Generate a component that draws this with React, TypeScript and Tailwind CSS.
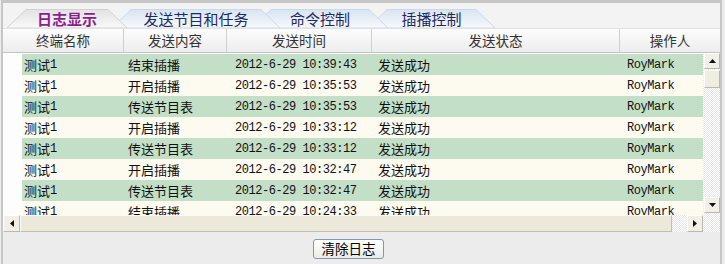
import React from "react";

const rows: string[][] = [
  ["测试", "结束插播", "2012-6-29 10:39:43", "发送成功", "RoyMark"],
  ["测试", "开启插播", "2012-6-29 10:35:53", "发送成功", "RoyMark"],
  ["测试", "传送节目表", "2012-6-29 10:35:53", "发送成功", "RoyMark"],
  ["测试", "开启插播", "2012-6-29 10:33:12", "发送成功", "RoyMark"],
  ["测试", "传送节目表", "2012-6-29 10:33:12", "发送成功", "RoyMark"],
  ["测试", "开启插播", "2012-6-29 10:32:47", "发送成功", "RoyMark"],
  ["测试", "传送节目表", "2012-6-29 10:32:47", "发送成功", "RoyMark"],
  ["测试", "结束插播", "2012-6-29 10:24:33", "发送成功", "RoyMark"],
];

function Tab({
  label,
  width,
  active,
  id,
  className,
}: {
  label: string;
  width: number;
  active?: boolean;
  id: string;
  className: string;
}) {
  const h = 19;
  const s = 19;
  return (
    <div className={`relative h-[19px] flex items-center justify-center shrink-0 ${className}`}>
      <svg
        className="absolute inset-0"
        width={width}
        height={h}
        viewBox={`0 0 ${width} ${h}`}
      >
        <defs>
          <linearGradient id={id} x1="0" y1="0" x2="0" y2="1">
            <stop offset="0" stopColor={active ? "#e2e2e2" : "#d8e4f1"} />
            <stop offset="1" stopColor={active ? "#f9f9f9" : "#f7f9fc"} />
          </linearGradient>
        </defs>
        <polygon
          points={`0,${h} ${s},0.5 ${width - s},0.5 ${width},${h}`}
          fill={`url(#${id})`}
          stroke={active ? "#d2d2d2" : "#c9d8ea"}
          strokeWidth="1"
        />
      </svg>
      <span
        className={`relative leading-none text-[15px] font-['Noto_Sans_CJK_SC',sans-serif] ${
          active ? "font-bold text-[#8a1f8c]" : "text-[#1d2a5e]"
        }`}
      >
        {label}
      </span>
    </div>
  );
}

function UpArrow() {
  return (
    <svg width="7" height="4" viewBox="0 0 7 4">
      <polygon points="0,4 3.5,0 7,4" fill="#111" />
    </svg>
  );
}
function DownArrow() {
  return (
    <svg width="7" height="4" viewBox="0 0 7 4">
      <polygon points="0,0 3.5,4 7,0" fill="#111" />
    </svg>
  );
}
function LeftArrow() {
  return (
    <svg width="4" height="7" viewBox="0 0 4 7">
      <polygon points="4,0 0,3.5 4,7" fill="#111" />
    </svg>
  );
}
function RightArrow() {
  return (
    <svg width="4" height="7" viewBox="0 0 4 7">
      <polygon points="0,0 4,3.5 0,7" fill="#111" />
    </svg>
  );
}

const cjk = "font-['Noto_Sans_CJK_SC',sans-serif]";
const mono = "font-['Liberation_Mono',monospace]";

export default function App() {
  return (
    <div className="w-[725px] h-[264px] bg-[#ededed] pl-[1px] pr-[3px] overflow-hidden">
      <div className="h-[280px] border-t-[3px] border-x-2 border-[#c6c6c6] flex flex-col">
        {/* Tabs */}
        <div className="h-[25px] bg-[#f3f3f3] flex items-end pl-[4px]">
          <Tab label="日志显示" width={120} active id="g1" className="w-[120px] z-40" />
          <Tab label="发送节目和任务" width={168} id="g2" className="w-[168px] -ml-[15px] z-30" />
          <Tab label="命令控制" width={136} id="g3" className="w-[136px] -ml-[28px] z-20" />
          <Tab label="插播控制" width={127} id="g4" className="w-[127px] -ml-[20px] z-10" />
        </div>

        {/* Header */}
        <div
          className={`h-[25px] flex border-t border-b border-t-[#e2e2e2] border-b-[#c4c4c4] bg-gradient-to-b from-[#fdfdfd] to-[#ededed] text-[13.5px] leading-none text-[#333] ${cjk}`}
        >
          <div className="w-[121px] flex items-center justify-center border-r border-[#cfcfcf]">终端名称</div>
          <div className="w-[103px] flex items-center justify-center border-r border-[#cfcfcf]">发送内容</div>
          <div className="w-[145px] flex items-center justify-center border-r border-[#cfcfcf]">发送时间</div>
          <div className="w-[248px] flex items-center justify-center border-r border-[#cfcfcf]">发送状态</div>
          <div className="flex-1 flex items-center justify-center">操作人</div>
        </div>

        {/* Body */}
        <div className="grid grid-cols-[700px_17px] grid-rows-[162px_17px]">
          <div className="bg-[#fdfdfd] pl-[19px] pt-[1px] overflow-hidden">
            {rows.map((r, i) => (
              <div
                key={i}
                className={`h-[21px] flex items-center text-[#111] ${
                  i % 2 === 0 ? "bg-[#c4dfc7]" : "bg-[#fdfaf0]"
                }`}
              >
                <div className="w-[102px] pl-[2px] flex items-center">
                  <span className={`${cjk} text-[13px] leading-none`}>{r[0]}</span>
                  <span className={`${mono} text-[12px] leading-none`}>1</span>
                </div>
                <div className={`w-[103px] pl-[4px] ${cjk} text-[13px] leading-none`}>{r[1]}</div>
                <div className={`w-[145px] pl-[8px] ${mono} text-[12px] tracking-[-0.45px] leading-none whitespace-nowrap`}>{r[2]}</div>
                <div className={`w-[248px] pl-[6px] ${cjk} text-[13px] leading-none`}>{r[3]}</div>
                <div className={`flex-1 pl-[7px] ${mono} text-[12px] tracking-[-0.45px] leading-none`}>{r[4]}</div>
              </div>
            ))}
          </div>

          {/* vertical scrollbar */}
          <div className="flex flex-col pl-[1px] bg-[repeating-conic-gradient(#e6e6e6_0%_25%,#ffffff_0%_50%)] [background-size:2px_2px]">
            <div className="h-[16px] w-[16px] flex items-center justify-center bg-[#f1efe6] border border-t-[#fff] border-l-[#fff] border-r-[#bcb9ab] border-b-[#bcb9ab]">
              <UpArrow />
            </div>
            <div className="h-[18px] w-[16px] mt-[1px] bg-[#efece0] border border-t-[#fff] border-l-[#fff] border-r-[#bcb9ab] border-b-[#bcb9ab]" />
            <div className="flex-1" />
            <div className="h-[16px] w-[16px] mb-[2px] flex items-center justify-center bg-[#f1efe6] border border-t-[#fff] border-l-[#fff] border-r-[#bcb9ab] border-b-[#bcb9ab]">
              <DownArrow />
            </div>
          </div>

          {/* horizontal scrollbar */}
          <div className="flex bg-[repeating-conic-gradient(#e6e6e6_0%_25%,#ffffff_0%_50%)] [background-size:2px_2px]">
            <div className="w-[17px] h-[17px] flex items-center justify-center bg-[#f1efe6] border border-t-[#fff] border-l-[#fff] border-r-[#bcb9ab] border-b-[#bcb9ab]">
              <LeftArrow />
            </div>
            <div className="w-[652px] h-[17px] bg-[#ece9da] border border-t-[#fbfaf5] border-l-[#fbfaf5] border-r-[#c2bfae] border-b-[#c2bfae]" />
            <div className="flex-1" />
            <div className="w-[16px] h-[17px] flex items-center justify-center bg-[#f1efe6] border border-t-[#fff] border-l-[#fff] border-r-[#bcb9ab] border-b-[#bcb9ab]">
              <RightArrow />
            </div>
          </div>
          <div className="bg-[repeating-conic-gradient(#e6e6e6_0%_25%,#ffffff_0%_50%)] [background-size:2px_2px]" />
        </div>

        {/* Bottom */}
        <div className="flex-1 bg-[#ececec] pt-[7px] pl-[310px]">
          <button
            className={`w-[71px] h-[20px] rounded-[3px] border border-[#7f97b3] bg-gradient-to-b from-[#ffffff] to-[#ebebe6] flex items-center justify-center ${cjk} text-[13.5px] leading-none text-black`}
          >
            清除日志
          </button>
        </div>
      </div>
    </div>
  );
}
